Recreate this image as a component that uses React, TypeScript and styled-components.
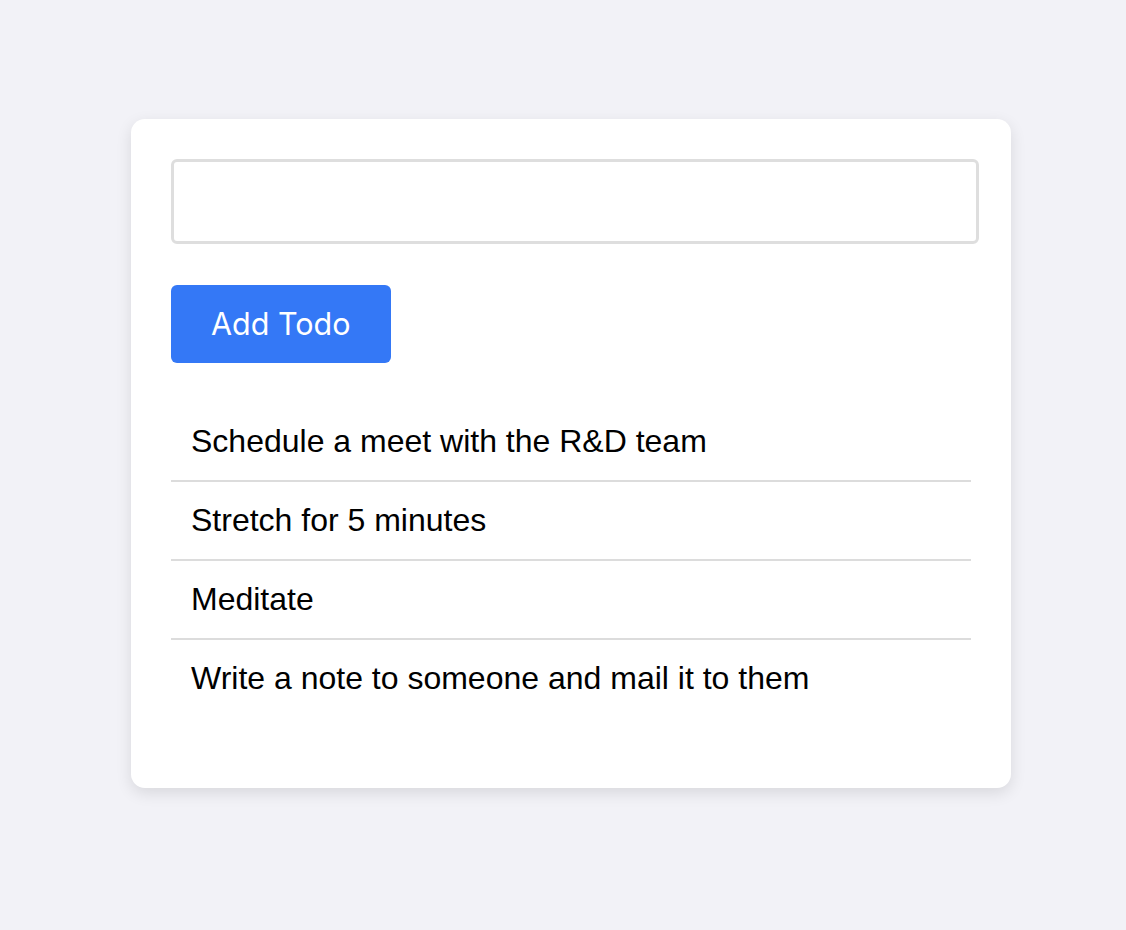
import React from "react";
import styled, { createGlobalStyle } from "styled-components";

const Global = createGlobalStyle`
  html, body { margin: 0; padding: 0; background: #f2f2f7; }
  body { font-family: "Liberation Sans", Arial, sans-serif; }
  * { box-sizing: border-box; }
`;

const Page = styled.div`
  min-height: 930px;
  padding: 119px 0 0 131px;
`;

const Card = styled.div`
  width: 880px;
  background: #ffffff;
  border-radius: 14px;
  box-shadow: 0 5px 16px rgba(0, 0, 0, 0.11);
  padding: 40px;
  display: flex;
  flex-direction: column;
  align-items: flex-start;
`;

const Input = styled.input`
  width: calc(100% + 8px);
  height: 85px;
  border: 3px solid #dedede;
  border-radius: 6px;
  font-family: "Liberation Sans", Arial, sans-serif;
  font-size: 32px;
  padding: 0 16px;
  outline: none;
  background: #fff;
`;

const Button = styled.button`
  margin-top: 41px;
  height: 78px;
  padding: 0 40px;
  border: none;
  border-radius: 6px;
  background: #3478f6;
  color: #ffffff;
  font-family: "Inter", "Liberation Sans", sans-serif;
  font-size: 30.5px;
  line-height: 38px;
  cursor: pointer;
`;

const List = styled.ul`
  list-style: none;
  margin: 40px 0 31px 0;
  padding: 0;
  width: 100%;
`;

const Item = styled.li<{ $last?: boolean }>`
  height: ${(p) => (p.$last ? "77px" : "79px")};
  padding: 0 20px;
  display: flex;
  align-items: center;
  font-size: 32px;
  color: #000;
  border-bottom: ${(p) => (p.$last ? "none" : "2px solid #dcdcdc")};
`;

const todos = [
  "Schedule a meet with the R&D team",
  "Stretch for 5 minutes",
  "Meditate",
  "Write a note to someone and mail it to them",
];

export default function App() {
  return (
    <>
      <Global />
      <Page>
        <Card>
          <Input type="text" />
          <Button>Add Todo</Button>
          <List>
            {todos.map((t, i) => (
              <Item key={t} $last={i === todos.length - 1}>
                {t}
              </Item>
            ))}
          </List>
        </Card>
      </Page>
    </>
  );
}
